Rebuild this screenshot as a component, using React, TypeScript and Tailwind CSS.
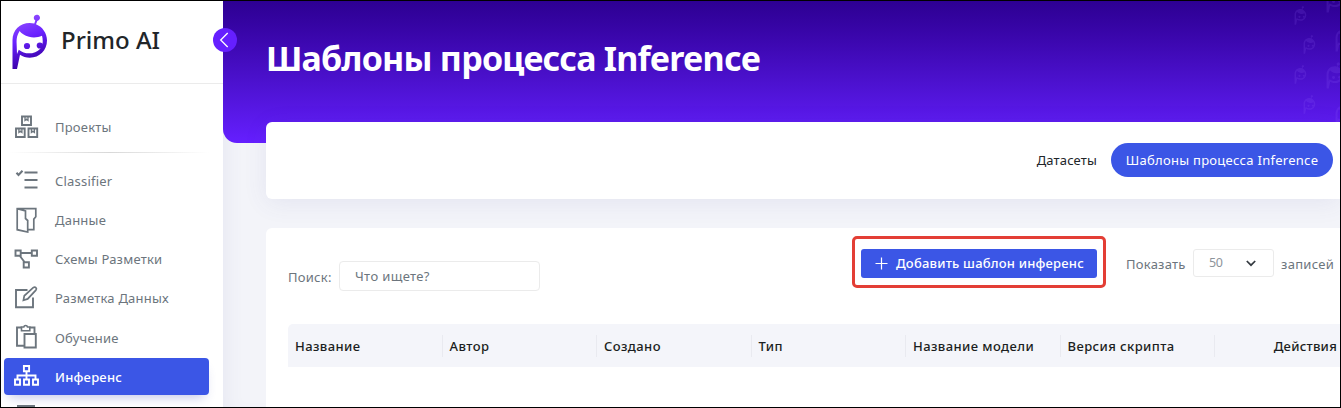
import type { ReactNode } from "react";

function Logo({ className, fill = "url(#logo)" }: { className: string; fill?: string }) {
  return (
    <svg viewBox="12 14 36 56" className={className} aria-hidden="true">
      <defs>
        <linearGradient id="logo" gradientUnits="userSpaceOnUse" x1="20" y1="22" x2="36" y2="62">
          <stop offset="0" stopColor="#8a45ff" />
          <stop offset="0.4" stopColor="#6a22ff" />
          <stop offset="1" stopColor="#3a00a8" />
        </linearGradient>
      </defs>
      <g fill={fill}>
        <path
          fillRule="evenodd"
          d="M12.500 69V40C12.500 30 20 23 29.700 23c1.600 0 3.200.2 4.600.6l1-3.100a3.100 3.100 0 1 1 2 .4L36 24.300c6.500 2.600 11 9 11 16.200 0 9.700-7.500 17.200-17.200 17.200-3.700 0-7-1-9.800-2.900L17 69zM19.600 31C17 35 16.400 39 16.600 43L17 54l1.800-4.300C22 52.300 26 53.600 30.500 53.300c4.300-.3 8.500-2.600 10.500-5.600L42.600 43c.3-2.500 0-5-.6-7.300-4 1.800-8.900 2.200-13 1-4.400-1.300-7.800-3.100-9.400-5.700z"
        />
        <circle cx="27" cy="46" r="3.100" />
        <circle cx="39.800" cy="45.500" r="3.100" />
      </g>
    </svg>
  );
}

function Icon({ children }: { children: ReactNode }) {
  return (
    <svg viewBox="0 0 26 26" className="h-[26px] w-[26px] shrink-0" fill="none" stroke="currentColor" strokeWidth="1.900" aria-hidden="true">
      {children}
    </svg>
  );
}

const boxes = (
  <Icon>
    <path d="M8 2.500h9v8.500H8zM2 14.500h8.700V23H2zM14.500 14.500h8.700V23h-8.700z" />
    <path d="M11 3v3.400l1.500-1.200L14 6.400V3M4.900 15v3.400l1.500-1.200 1.500 1.200V15M17.400 15v3.400l1.500-1.200 1.500 1.200V15" strokeWidth="1.300" />
  </Icon>
);
const checklist = (
  <Icon>
    <path d="M2.500 4.800 4.500 7l4-4.300" strokeWidth="2.100" />
    <path d="M10.500 4.500h13M10.500 12h13M10.500 19.500h13" />
  </Icon>
);
const folder = (
  <Icon>
    <path d="M3.200 1.800 11.500 4v7.500l2.200 2V25L3.200 22.700zM3.200 1.600h18.600v8.200l-2 2.300v10.600h-6" strokeWidth="1.700" />
  </Icon>
);
const scheme = (
  <Icon>
    <path d="M1.500 4.500h5.200v5.200H1.500zM17.800 4.500H23v5.200h-5.200zM9.700 16.300h5.200v5.200H9.700zM6.700 7h11.100M5.700 9.700l5 6.600" />
  </Icon>
);
const edit = (
  <Icon>
    <path d="M13.500 5H2v17.200h17V12.500" />
    <path d="m9.400 15.300.9-4.500 8.900-8.200c2-1.500 4.200.5 2.700 2.500l-8.200 8.800z" strokeWidth="1.700" />
  </Icon>
);
const paste = (
  <Icon>
    <path d="M7.500 3.500H3v18.300h7M15.500 3.500h5v6M10.500 10h11.300v13.500H10.500z" />
    <path d="M7.500 3v3.700h8.300V3h-2.300c-.4-2-3.300-2-3.700 0z" strokeWidth="1.600" />
  </Icon>
);
const tree = (
  <Icon>
    <path d="M9.900 3h5.200v5.200H9.900zM1 16.500h5v5.200H1zM10 16.500h5v5.200h-5zM19 16.500h5v5.200h-5zM12.500 8.200v8.300M3.500 16.500v-4h18v4" />
  </Icon>
);

const items: { label: string; icon: ReactNode }[] = [
  { label: "Classifier", icon: checklist },
  { label: "Данные", icon: folder },
  { label: "Схемы Разметки", icon: scheme },
  { label: "Разметка Данных", icon: edit },
  { label: "Обучение", icon: paste },
  { label: "Инференс", icon: tree },
];

function NavItem({ label, icon, active }: { label: string; icon: ReactNode; active?: boolean }) {
  return (
    <a
      className={
        "ml-[3px] flex h-[37px] w-[205px] shrink-0 items-center gap-[15px] rounded-[4px] pl-[10px] tracking-[0.22px] " +
        (active
          ? "bg-[#3b56e6] font-medium text-white shadow-[0_7px_12px_-5px_rgba(60,70,180,0.32)]"
          : "text-[#6c757d]")
      }
    >
      {icon}
      <span className="pt-[2px]">{label}</span>
    </a>
  );
}

function Sidebar() {
  return (
    <aside className="relative z-10 flex w-[222px] shrink-0 flex-col bg-white">
      <div className="flex h-[83px] shrink-0 items-start border-b border-[#ebebeb] pl-[11px] pt-[13px]">
        <Logo className="h-[56px] w-9" />
        <span className="ml-[13px] mt-[9px] text-[24px] font-medium leading-[34px] text-[#212529]">Primo AI</span>
      </div>
      <button className="absolute left-[212px] top-[27px] flex size-6 items-center justify-center rounded-full bg-[#651fff] text-white">
        <svg viewBox="0 0 24 24" className="size-6" fill="none" stroke="currentColor" strokeWidth="1.300">
          <path d="m14.700 5-7 7 7 7" />
        </svg>
      </button>
      <nav className="flex flex-col pt-[24px]">
        <NavItem label="Проекты" icon={boxes} />
        <div className="ml-2 mt-[7px] h-px w-[200px] bg-linear-to-r from-transparent via-[#d8d8d8] to-transparent" />
        <div className="mt-[9px] flex flex-col gap-[2.200px]">
          {items.map((item) => (
            <NavItem key={item.label} {...item} active={item.label === "Инференс"} />
          ))}
        </div>
        <div className="ml-[16px] mt-[10px] h-3 w-[18px] border-2 border-[#6c757d]" />
      </nav>
    </aside>
  );
}

const marks = [
  "left-[1294px] top-[5px] h-[19px] w-[13px]",
  "left-[1303px] top-[34px] h-[19px] w-[13px]",
  "left-[1294px] top-[64px] h-[19px] w-[13px]",
  "left-[1303px] top-[94px] h-[19px] w-[13px]",
  "left-[1326px] top-[-15px] h-[27px] w-[18px]",
  "left-[1335px] top-[24px] h-[27px] w-[18px]",
  "left-[1326px] top-[61px] h-[27px] w-[18px]",
  "left-[1335px] top-[100px] h-[27px] w-[18px]",
];

function Hero() {
  return (
    <header className="h-[142px] shrink-0 rounded-bl-[14px] bg-linear-to-b from-[#2d0092] to-[#651fff] pl-[43px] pt-[33px]">
      <h1 className="whitespace-nowrap text-[34px] font-bold leading-[48px] tracking-[-0.8px] text-white">
        Шаблоны процесса Inference
      </h1>
    </header>
  );
}

const columns = ["Название", "Автор", "Создано", "Тип", "Название модели", "Версия скрипта"];

function TemplatesCard() {
  return (
    <section className="mt-[29px] h-[200px] shrink-0 rounded-tl-[6px] bg-white pl-[22px]">
      <div className="flex h-[96px] items-start whitespace-nowrap text-[#6c757d]">
        <label className="mt-[39px] w-[51px] leading-5 tracking-[0.25px]">Поиск:</label>
        <div className="mt-[33px] h-[30px] w-[201px] rounded-[4px] border border-[#ebebeb] pl-[15px] leading-[28px] tracking-[0.36px]">
          Что ищете?
        </div>
        <div className="ml-[312px] mt-[8px] flex h-[52px] w-[254px] items-center justify-center rounded-[5px] border-[3px] border-[#e33e35]">
          <button className="mt-[2px] flex h-[29px] w-[236px] items-center rounded-[3px] bg-[#3b56e6] pl-[14px] font-medium tracking-[0.2px] text-white">
            <svg viewBox="0 0 13 13" className="mr-[8px] size-[13px]" stroke="currentColor" strokeWidth="1.200">
              <path d="M6.500.5v12M.5 6.500h12" />
            </svg>
            <span className="pt-[2px]">Добавить шаблон инференс</span>
          </button>
        </div>
        <span className="ml-[20px] mt-[26px] w-[67px] leading-5 tracking-[0.25px]">Показать</span>
        <div className="mt-[21px] flex h-[28px] w-[81px] items-center justify-between rounded-[3px] border border-[#ebebeb] pl-[15px] pr-[17px] text-[#8d949b]">
          <span className="pt-px text-[12.500px] tracking-[-0.3px]">50</span>
          <svg viewBox="0 0 10 10" className="size-[10px]" fill="none" stroke="#343a40" strokeWidth="1.700">
            <path d="m.8 3 4.200 4.200L9.200 3" />
          </svg>
        </div>
        <span className="ml-[7px] mt-[26px] leading-5 tracking-[0.3px]">записей</span>
      </div>
      <div className="flex h-[43px] items-center rounded-tl-[5px] bg-[#f4f5fa] font-medium tracking-[0.42px] text-[#1b1e21]">
        {columns.map((name) => (
          <div key={name} className="flex h-[22px] w-[154.500px] shrink-0 items-center whitespace-nowrap border-r border-[#e9eaf0] pl-[7px] pt-[2px]">
            {name}
          </div>
        ))}
        <div className="flex-1 pr-[3px] pt-[2px] text-right tracking-[0.25px]">Действия</div>
      </div>
    </section>
  );
}

export default function App() {
  return (
    <div className="flex h-[408px] w-[1341px] overflow-hidden border border-black bg-[#f3f4f9] text-[13px] [font-family:'Noto_Sans',sans-serif]">
      <Sidebar />
      <main className="relative flex min-w-0 flex-1 flex-col shadow-[inset_14px_0_18px_-10px_rgba(80,80,150,0.07)]">
        <Hero />
        <div className="pointer-events-none absolute inset-x-0 top-0 h-[121px] overflow-hidden">
          <div className="absolute -left-[223px] top-0 h-full w-[1341px] opacity-15">
            {marks.map((place) => (
              <div key={place} className={"absolute " + place}>
                <Logo className="size-full" fill="#9a6bff" />
              </div>
            ))}
          </div>
        </div>
        <div className="relative -mt-[21px] flex flex-col pl-[43px]">
          <nav className="flex h-[77px] shrink-0 items-center justify-end rounded-l-[6px] bg-white pb-px pr-[7px] shadow-[0_4px_24px_rgba(80,80,150,0.09)]">
            <a className="mr-[14px] pt-[2px] tracking-[0.15px] text-[#212529]">Датасеты</a>
            <a className="flex h-[34px] w-[222px] items-center justify-center rounded-full bg-[#3b56e6] pt-px tracking-[0.28px] text-white">
              Шаблоны процесса Inference
            </a>
          </nav>
          <TemplatesCard />
        </div>
      </main>
    </div>
  );
}
